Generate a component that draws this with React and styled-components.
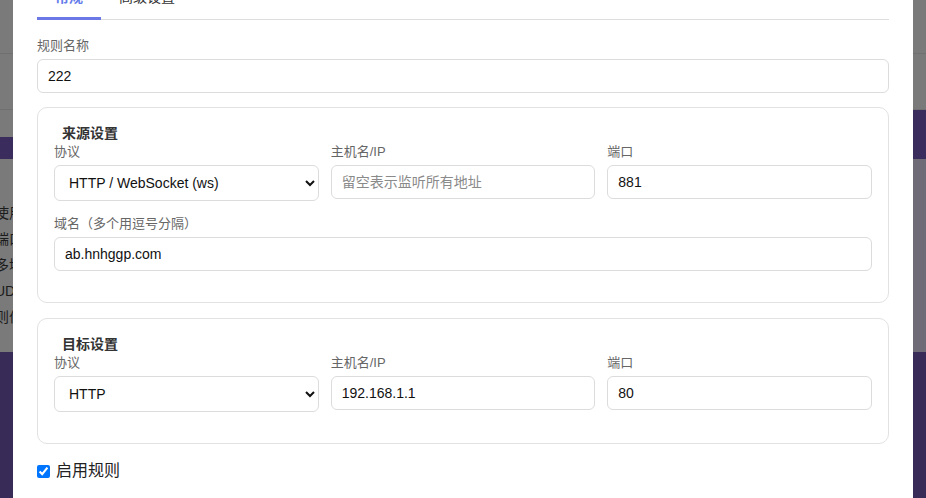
import React, { useState } from 'react';
import styled, { createGlobalStyle } from 'styled-components';

const GlobalStyle = createGlobalStyle`
    html, body {
        margin: 0;
        padding: 0;
        width: 926px;
        height: 498px;
        overflow: hidden;
        font-family: "Liberation Sans", Arial, "Noto Sans CJK SC", sans-serif;
    }
`

const behindLines = ['使用说明', '端口转发', '多域名', 'UDP', '则优先'];

function App() {

    const [tab, settab] = useState('basic');
    const [enabled, setenabled] = useState(true);

    return (
        <Page>
            <GlobalStyle />
            <Backdrop>
                <TopBar />
                <TopBar />
                <Hero>
                    <HeroPatch />
                </Hero>
                <ContentBand>
                    <Card>
                        {behindLines.map((line, index) => (
                            <CardLine key={index}>{line}</CardLine>
                        ))}
                    </Card>
                </ContentBand>
                <Footer />
            </Backdrop>

            <Modal>
                <Tabs>
                    <Tab active={tab === 'basic'} onClick={() => settab('basic')}>常规</Tab>
                    <Tab active={tab === 'advanced'} onClick={() => settab('advanced')}>高级设置</Tab>
                </Tabs>

                <Group gap="14px">
                    <Label>规则名称</Label>
                    <Input defaultValue="222" />
                </Group>

                <Section>
                    <SectionTitle>来源设置</SectionTitle>
                    <Row>
                        <div>
                            <Label>协议</Label>
                            <Select defaultValue="ws">
                                <option value="http">HTTP</option>
                                <option value="ws">HTTP / WebSocket (ws)</option>
                                <option value="tcp">TCP</option>
                            </Select>
                        </div>
                        <div>
                            <Label>主机名/IP</Label>
                            <Input placeholder="留空表示监听所有地址" />
                        </div>
                        <div>
                            <Label>端口</Label>
                            <Input defaultValue="881" />
                        </div>
                    </Row>
                    <Group gap="15px">
                        <Label>域名（多个用逗号分隔）</Label>
                        <Input defaultValue="ab.hnhggp.com" />
                    </Group>
                </Section>

                <Section>
                    <SectionTitle>目标设置</SectionTitle>
                    <Row last>
                        <div>
                            <Label>协议</Label>
                            <Select defaultValue="http">
                                <option value="http">HTTP</option>
                                <option value="https">HTTPS</option>
                            </Select>
                        </div>
                        <div>
                            <Label>主机名/IP</Label>
                            <Input defaultValue="192.168.1.1" />
                        </div>
                        <div>
                            <Label>端口</Label>
                            <Input defaultValue="80" />
                        </div>
                    </Row>
                </Section>

                <CheckRow>
                    <input type="checkbox" checked={enabled} onChange={(e) => setenabled(e.target.checked)} />
                    <span>启用规则</span>
                </CheckRow>
            </Modal>
        </Page>
    )
}

export default App;


const Page = styled.div`
    position: relative;
    width: 926px;
    height: 498px;
    overflow: hidden;
    background: #382b58;
`

const Backdrop = styled.div`
    display: flex;
    flex-direction: column;
`

const TopBar = styled.div`
    height: 53px;
    background: #7a7a7a;
    border-bottom: 1px solid #707070;
    flex-shrink: 0;

    & + & {
        height: 55px;
    }
`

const Hero = styled.div`
    height: 49px;
    background: #3a2d5e;
    display: flex;
    flex-shrink: 0;
`

const HeroPatch = styled.div`
    width: 40px;
    height: 27px;
    background: #7a7a7a;
`

const ContentBand = styled.div`
    height: 193px;
    background: #6f6c78;
    display: flex;
    flex-shrink: 0;
`

const Card = styled.div`
    width: 300px;
    background: #7a7a7a;
    padding-top: 41px;
    display: flex;
    flex-direction: column;
`

const CardLine = styled.div`
    font-size: 14px;
    line-height: 26px;
    color: #1c1c1c;
    text-indent: -5px;
    white-space: nowrap;
`

const Footer = styled.div`
    flex: 1;
    background: #382b58;
`

const Modal = styled.div`
    position: absolute;
    left: 13px;
    top: -46px;
    width: 900px;
    box-sizing: border-box;
    padding: 24px;
    background: #fff;
    min-height: 600px;
`

const Tabs = styled.div`
    display: flex;
    border-bottom: 1px solid #dedede;
    margin-bottom: 16px;
`

const Tab = styled.div`
    padding: 9px 18px 10px;
    font-size: 14px;
    line-height: 20px;
    margin-bottom: -1px;
    color: ${props => props.active ? '#667eea' : '#333'};
    font-weight: ${props => props.active ? 600 : 400};
    border-bottom: 3px solid ${props => props.active ? '#6b78e5' : 'transparent'};
    cursor: pointer;
`

const Group = styled.div`
    margin-bottom: ${props => props.gap || '15px'};
`

const Label = styled.label`
    display: block;
    font-size: 13px;
    line-height: 20px;
    color: #666;
    margin-bottom: 3px;
`

const Input = styled.input`
    display: block;
    width: 100%;
    box-sizing: border-box;
    height: 34px;
    padding: 0 10px;
    border: 1px solid #dcdcdc;
    border-radius: 6px;
    font-family: inherit;
    font-size: 14px;
    color: #111;
    background: #fff;
    outline: none;

    &::placeholder {
        color: #8a8a8a;
    }
`

const Select = styled.select`
    display: block;
    width: 100%;
    box-sizing: border-box;
    height: 36px;
    padding: 0 6px 0 10px;
    border: 1px solid #dcdcdc;
    border-radius: 6px;
    font-family: inherit;
    font-size: 14px;
    color: #111;
    background: #fff;
    outline: none;
`

const Section = styled.div`
    border: 1px solid #e2e2e2;
    border-radius: 10px;
    padding: 16px;
    margin-bottom: 15px;
`

const SectionTitle = styled.div`
    font-size: 14px;
    font-weight: 700;
    line-height: 18px;
    color: #333;
    padding-left: 8px;
`

const Row = styled.div`
    display: grid;
    grid-template-columns: repeat(3, 1fr);
    gap: 12px;
    margin-bottom: ${props => props.last ? '15px' : '13px'};
`

const CheckRow = styled.label`
    display: flex;
    align-items: center;
    gap: 6px;
    font-size: 16px;
    line-height: 22px;
    color: #222;
    margin-top: 16px;

    input {
        width: 13px;
        height: 13px;
        margin: 0;
        accent-color: #0075ff;
    }
`
